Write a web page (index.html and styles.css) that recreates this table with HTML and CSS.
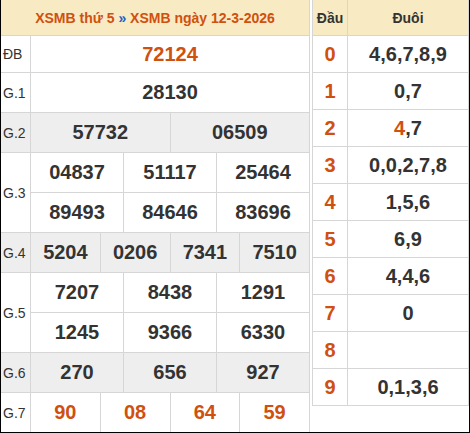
FILE: index.html
```html
<!DOCTYPE html>
<html lang="vi">
<head>
<meta charset="utf-8">
<title>XSMB ngày 12-3-2026</title>
<link rel="stylesheet" href="styles.css">
</head>
<body>
<div class="frame">
  <div class="kq">
    <div class="head">XSMB thứ 5&nbsp;<span class="sep">»</span>&nbsp;XSMB ngày 12-3-2026</div>

    <div class="lbl">ĐB</div>
    <div class="num hot s12">72124</div>

    <div class="lbl">G.1</div>
    <div class="num s12">28130</div>

    <div class="lbl gray">G.2</div>
    <div class="num gray s6">57732</div>
    <div class="num gray s6">06509</div>

    <div class="lbl r2">G.3</div>
    <div class="num s4">04837</div>
    <div class="num s4">51117</div>
    <div class="num s4">25464</div>
    <div class="num s4">89493</div>
    <div class="num s4">84646</div>
    <div class="num s4">83696</div>

    <div class="lbl gray">G.4</div>
    <div class="num gray s3">5204</div>
    <div class="num gray s3">0206</div>
    <div class="num gray s3">7341</div>
    <div class="num gray s3">7510</div>

    <div class="lbl r2">G.5</div>
    <div class="num s4">7207</div>
    <div class="num s4">8438</div>
    <div class="num s4">1291</div>
    <div class="num s4">1245</div>
    <div class="num s4">9366</div>
    <div class="num s4">6330</div>

    <div class="lbl gray">G.6</div>
    <div class="num gray s4">270</div>
    <div class="num gray s4">656</div>
    <div class="num gray s4">927</div>

    <div class="lbl">G.7</div>
    <div class="num hot s3">90</div>
    <div class="num hot s3">08</div>
    <div class="num hot s3">64</div>
    <div class="num hot s3">59</div>
  </div>

  <div class="lt">
    <div class="th">Đầu</div>
    <div class="th">Đuôi</div>

    <div class="num hot">0</div><div class="num">4,6,7,8,9</div>
    <div class="num hot">1</div><div class="num">0,7</div>
    <div class="num hot">2</div><div class="num"><span class="hot">4</span>,7</div>
    <div class="num hot">3</div><div class="num">0,0,2,7,8</div>
    <div class="num hot">4</div><div class="num">1,5,6</div>
    <div class="num hot">5</div><div class="num">6,9</div>
    <div class="num hot">6</div><div class="num">4,4,6</div>
    <div class="num hot">7</div><div class="num">0</div>
    <div class="num hot">8</div><div class="num"></div>
    <div class="num hot">9</div><div class="num">0,1,3,6</div>
  </div>
</div>
</body>
</html>
```

FILE: styles.css
```css
* {
  box-sizing: border-box;
}

html,
body {
  margin: 0;
  padding: 0;
  background: #fff;
}

body {
  font-family: "Liberation Sans", Arial, sans-serif;
  color: #333;
}

.frame {
  width: 470px;
  height: 433px;
  display: flex;
  align-items: flex-start;
  gap: 2px;
  border: 1px solid #000;
  border-top: 0;
}

.kq {
  width: 309px;
  display: grid;
  grid-template-columns: 29px repeat(12, 1fr);
  grid-template-rows: 35px 36px repeat(9, 39px);
  gap: 1px;
  background: #d6d6d6;
  border-right: 1px solid #d6d6d6;
}

.kq > div,
.lt > div {
  background: #fff;
  display: flex;
  align-items: center;
  justify-content: center;
  white-space: nowrap;
}

.kq > .head {
  grid-column: 1 / -1;
  background: #f8eac3;
  color: #d0500f;
  font-weight: bold;
  font-size: 14px;
}

.sep {
  color: #1f5fc4;
}

.kq > .lbl {
  justify-content: flex-start;
  padding-left: 2px;
  font-size: 14px;
  color: #333;
}

.num {
  font-size: 20px;
  font-weight: bold;
  color: #333;
}

.hot {
  color: #d0500f;
}

.kq > .gray {
  background: #eeeeee;
}

.s12 { grid-column: span 12; }
.s6 { grid-column: span 6; }
.s4 { grid-column: span 4; }
.s3 { grid-column: span 3; }
.r2 { grid-row: span 2; }

.lt {
  width: 157px;
  display: grid;
  grid-template-columns: 34px 1fr;
  grid-template-rows: 35px repeat(10, 36px);
  gap: 1px;
  background: #d6d6d6;
  border: 1px solid #d6d6d6;
  border-top: 0;
}

.lt > .th {
  background: #f8eac3;
  font-size: 14px;
  font-weight: bold;
  color: #333;
}
```
